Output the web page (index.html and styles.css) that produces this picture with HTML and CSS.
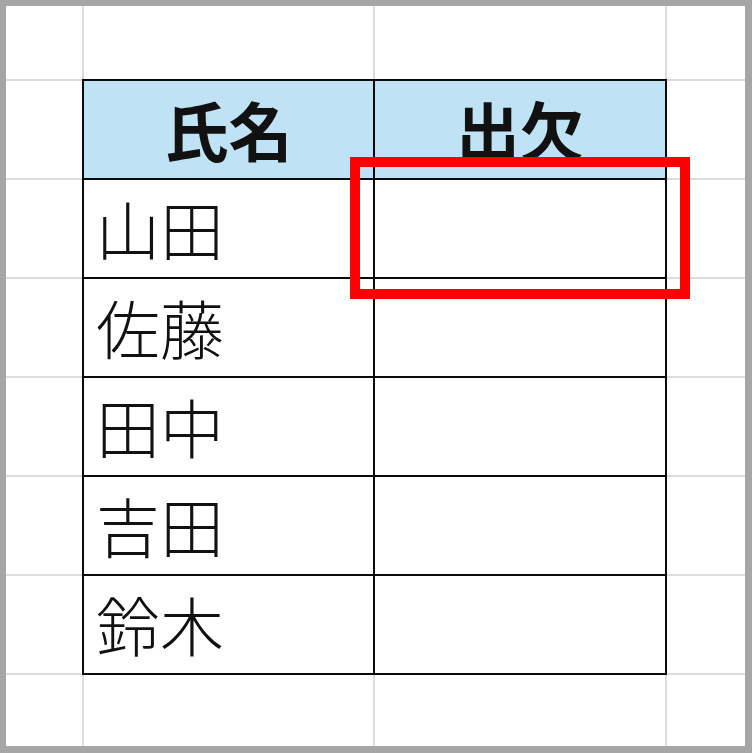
FILE: index.html
```html
<!DOCTYPE html>
<html lang="ja">
<head>
<meta charset="utf-8">
<title>出欠表</title>
<link rel="stylesheet" href="styles.css">
</head>
<body>
<div class="sheet">
  <div class="grid">
    <div class="roster">
      <div class="cell head">氏名</div>
      <div class="cell head">出欠</div>
      <div class="cell name">山田</div>
      <div class="cell"></div>
      <div class="cell name">佐藤</div>
      <div class="cell"></div>
      <div class="cell name">田中</div>
      <div class="cell"></div>
      <div class="cell name">吉田</div>
      <div class="cell"></div>
      <div class="cell name">鈴木</div>
      <div class="cell"></div>
    </div>
    <div class="blank"></div><div class="blank"></div><div class="blank"></div><div class="blank"></div>
    <div class="blank"></div><div class="blank"></div>
    <div class="blank"></div><div class="blank"></div>
    <div class="blank"></div><div class="blank"></div>
    <div class="blank"></div><div class="blank"></div>
    <div class="blank"></div><div class="blank"></div>
    <div class="blank"></div><div class="blank"></div>
    <div class="blank"></div><div class="blank"></div><div class="blank"></div><div class="blank"></div>
  </div>
  <div class="highlight"></div>
</div>
</body>
</html>
```
FILE: styles.css
```css
html, body {
  margin: 0;
  padding: 0;
  background: #ffffff;
}
.sheet {
  position: relative;
  width: 752px;
  height: 753px;
  box-sizing: border-box;
  border-style: solid;
  border-color: #a6a6a6;
  border-width: 6px 7px 7px 6px;
  background: #ffffff;
  font-family: "Noto Sans CJK JP", "Noto Sans", sans-serif;
}
.grid {
  display: grid;
  grid-template-columns: 76px 289px 290px 1fr;
  grid-template-rows: 73px repeat(6, 97px) 1fr;
  gap: 2px;
  background: #dcdcdc;
  height: 100%;
}
.blank {
  background: #ffffff;
}
.roster {
  grid-column: 2 / 4;
  grid-row: 2 / 8;
  margin: -2px;
  border: 2px solid #0a0a0a;
  background: #0a0a0a;
  display: grid;
  grid-template-columns: 289px 290px;
  grid-template-rows: repeat(6, 97px);
  gap: 2px;
}
.cell {
  background: #ffffff;
  display: flex;
  align-items: center;
  color: #111111;
  font-size: 64px;
  line-height: 1;
  padding-bottom: 3px;
  box-sizing: border-box;
}
.head {
  background: #bfe3f4;
  justify-content: center;
  font-weight: 700;
}
.name {
  padding-left: 12px;
  font-weight: 300;
}
.highlight {
  position: absolute;
  left: 344px;
  top: 151px;
  width: 340px;
  height: 142px;
  box-sizing: border-box;
  border: 10px solid #ff0000;
}
```
